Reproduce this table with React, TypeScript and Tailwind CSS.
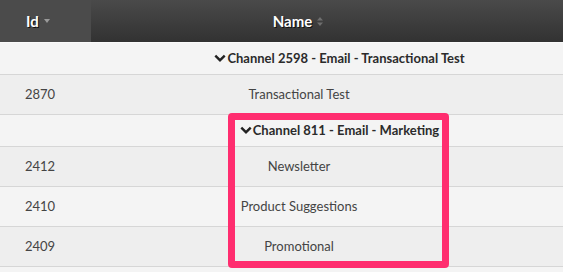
import React from 'react';

type Row =
  | { kind: 'group'; label: string }
  | { kind: 'item'; id: string; name: string };

const rows: Row[] = [
  { kind: 'group', label: 'Channel 2598 - Email - Transactional Test' },
  { kind: 'item', id: '2870', name: 'Transactional Test' },
  { kind: 'group', label: 'Channel 811 - Email - Marketing' },
  { kind: 'item', id: '2412', name: 'Newsletter' },
  { kind: 'item', id: '2410', name: 'Product Suggestions' },
  { kind: 'item', id: '2409', name: 'Promotional' },
  { kind: 'item', id: '', name: '' },
];

function Chevron() {
  return (
    <svg width="12" height="9" viewBox="0 0 13 9" className="mr-px shrink-0">
      <path d="M0.5 2.2 L2.3 0.4 L6.5 4.6 L10.7 0.4 L12.5 2.2 L6.5 8.2 Z" fill="#222" />
    </svg>
  );
}

export default function App(): React.ReactElement {
  return (
    <div
      className="relative w-[563px] h-[272px] overflow-hidden bg-[#f4f4f4]"
      style={{ fontFamily: 'Lato, "Open Sans", sans-serif' }}
    >
      {/* Header */}
      <div className="flex h-[43px] border-b border-[#fafafa] text-white text-[15px] font-bold">
        <div className="w-[91px] shrink-0 bg-[#4b4b4b] flex items-center pl-[26px] gap-[5px] [text-shadow:1px_1px_0_#111]">
          <span>Id</span>
          <svg width="6" height="4" viewBox="0 0 6 4">
            <path d="M0 0 H6 L3 4 Z" fill="#9a9a9a" />
          </svg>
        </div>
        <div className="flex-1 bg-gradient-to-b from-[#4a4a4a] to-[#323232] flex items-center">
          <div className="w-[414px] shrink-0 flex items-center justify-center gap-[5px] [text-shadow:1px_1px_0_#111]">
            <span>Name</span>
            <svg width="6" height="9" viewBox="0 0 6 9">
              <path d="M0 3.5 L3 0 L6 3.5 Z M0 5.5 H6 L3 9 Z" fill="#6f6f6f" />
            </svg>
          </div>
        </div>
      </div>

      {/* Body */}
      {rows.map((row, i) => {
        const bg = i % 2 === 0 ? 'bg-[#f4f4f4]' : 'bg-[#eeeeee]';
        if (row.kind === 'group') {
          return (
            <div
              key={i}
              className={`flex items-center h-[32px] border-b border-[#d6d6d6] ${bg} text-[13px] font-bold text-[#2b2b2b]`}
            >
              <div className="w-[91px] shrink-0" />
              <div className="w-[497px] shrink-0 flex items-center justify-center">
                <Chevron />
                <span className="whitespace-nowrap">{row.label}</span>
              </div>
            </div>
          );
        }
        return (
          <div
            key={i}
            className={`flex items-center h-[40px] border-b border-[#d6d6d6] ${bg} text-[13px] text-[#444]`}
          >
            <div className="w-[80px] shrink-0 text-center">{row.id}</div>
            <div className="w-[438px] shrink-0 text-center">{row.name}</div>
          </div>
        );
      })}

      {/* Highlight overlay */}
      <div className="absolute left-[228px] top-[113px] w-[221px] h-[155px] border-[7px] border-[#ff2d6f] rounded-[4px]" />
    </div>
  );
}
